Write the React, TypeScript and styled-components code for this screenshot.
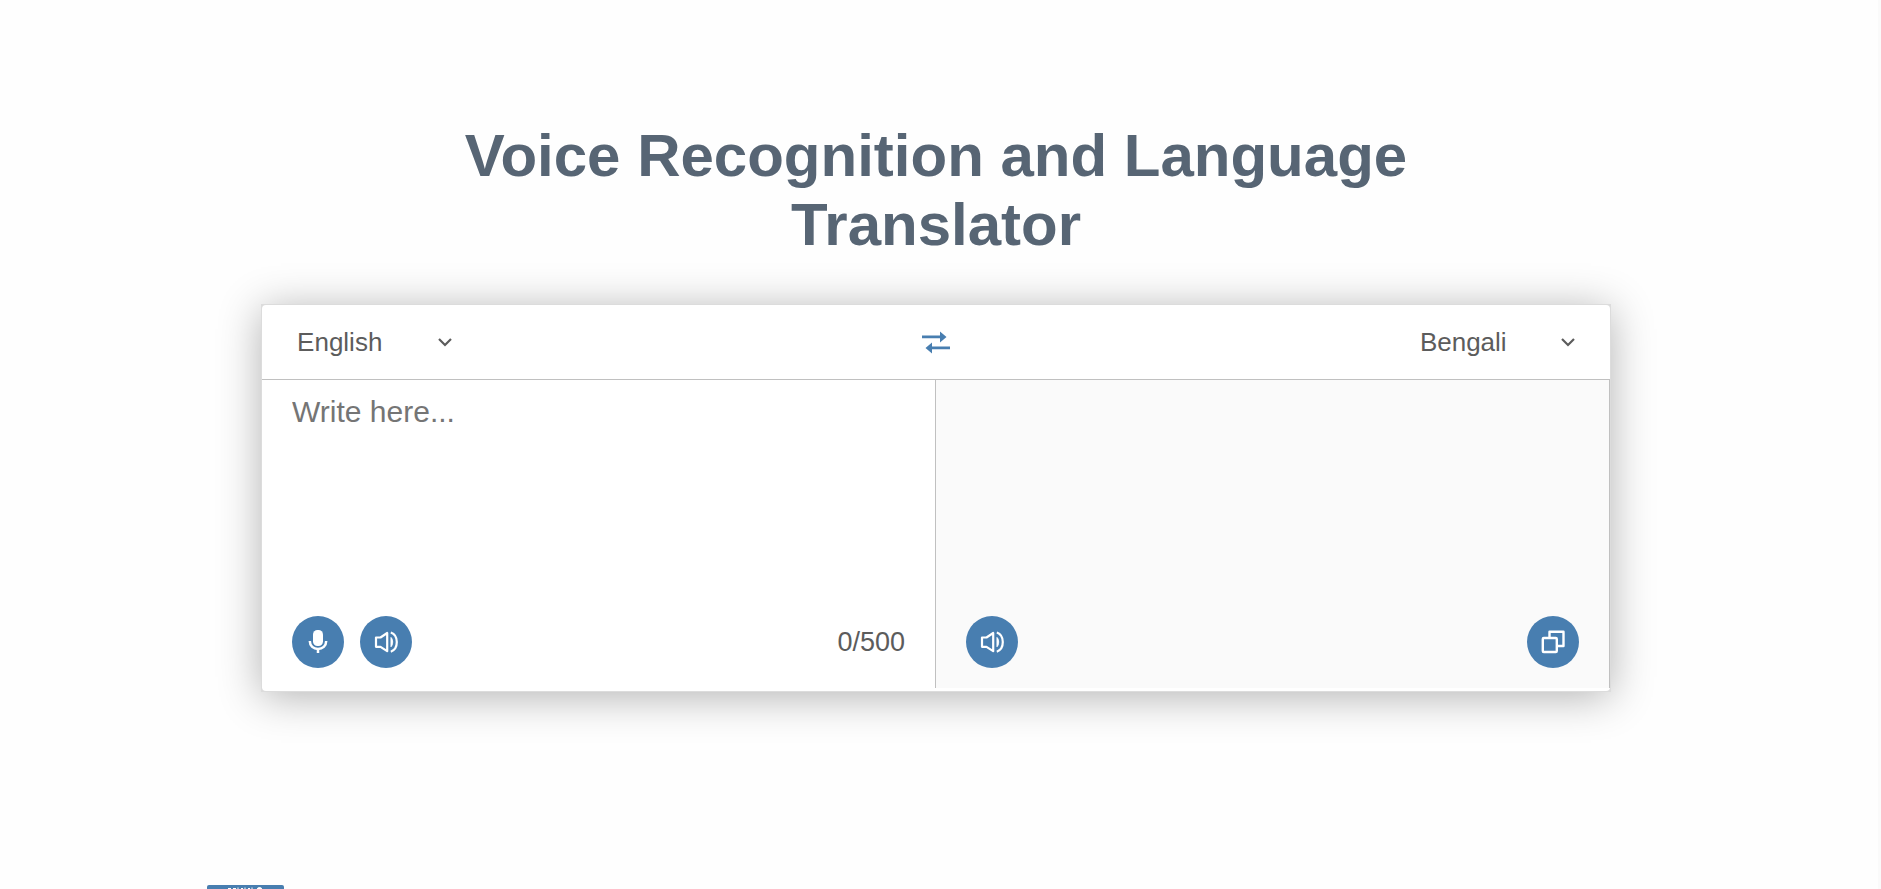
import React, { useState } from "react";
import styled, { createGlobalStyle } from "styled-components";

const GlobalStyle = createGlobalStyle`
  *, *::before, *::after { box-sizing: border-box; }
  body {
    margin: 0;
    background: #fefefe;
    font-family: "Liberation Sans", Arial, Helvetica, sans-serif;
  }
  button, select, textarea { font-family: inherit; }
`;

const Page = styled.div`
  display: flex;
  height: 100vh;
  overflow: hidden;
`;

const Main = styled.main`
  flex: 1;
  display: flex;
  flex-direction: column;
  align-items: center;
  padding: 121px 6px 0 0;
`;

const Gutter = styled.div`
  width: 3px;
  background: #fafafa;
`;

const Title = styled.h1`
  width: 60%;
  margin: 0 0 45px;
  color: #576574;
  font-size: 60px;
  line-height: 69px;
  text-align: center;
`;

const Frame = styled.div`
  width: calc(72% + 2px);
  border: 1px solid #dcdcdc;
  background: #dcdcdc;
  box-shadow: 0 5px 40px rgba(0, 0, 0, 0.3);
`;

const Card = styled.section`
  padding-bottom: 3px;
  border-radius: 4px;
  background: #fff;
`;

const Toolbar = styled.header`
  display: flex;
  align-items: center;
  justify-content: space-between;
  height: 75px;
  padding: 0 30px;
  border-bottom: 1px solid #c0c0c0;
`;

const SelectBox = styled.label`
  display: grid;
  align-items: center;
  width: 165px;

  > * { grid-area: 1 / 1; }
  svg { justify-self: end; margin-right: 5px; pointer-events: none; }
`;

const Select = styled.select`
  width: 100%;
  height: 40px;
  padding: 0 5px;
  border: none;
  outline: none;
  appearance: none;
  background: none;
  color: #5c5c5c;
  font-size: 26px;
`;

const SwapButton = styled.button`
  display: flex;
  padding: 0;
  border: none;
  background: none;
  color: #487eb0;
  cursor: pointer;
`;

const Panes = styled.div`
  display: grid;
  grid-template-columns: 1fr 1fr;
`;

const Pane = styled.div<{ $output?: boolean }>`
  display: flex;
  flex-direction: column;
  justify-content: space-between;
  height: 308px;
  padding: 15px 30px 20px;
  border-right: 1px solid #c0c0c0;
  background: ${({ $output }) => ($output ? "#fafafa" : "#fff")};
`;

const TextArea = styled.textarea`
  flex: 1;
  width: 100%;
  padding: 0;
  border: none;
  outline: none;
  resize: none;
  background: none;
  color: #5c5c5c;
  font-size: 30px;
  line-height: 34px;

  &::placeholder { color: #757575; }
`;

const Controls = styled.div`
  display: flex;
  align-items: center;
  justify-content: space-between;
`;

const Group = styled.div`
  display: flex;
  gap: 16px;
`;

const RoundButton = styled.button`
  display: flex;
  align-items: center;
  justify-content: center;
  width: 52px;
  height: 52px;
  padding: 0;
  border: none;
  border-radius: 50%;
  background: #487eb0;
  color: #fff;
  cursor: pointer;
`;

const Counter = styled.span`
  color: #5c5c5c;
  font-size: 27px;
`;

const Footer = styled.footer`
  width: 78%;
  margin-top: 193px;
  padding-left: 1px;
`;

const Badge = styled.a`
  display: flex;
  width: 77px;
  height: 28px;
  padding-top: 2px;
  justify-content: center;
  border-radius: 2px;
  background: #487eb0;
`;

const Chevron = () => (
  <svg width="14" height="10" viewBox="0 0 14 10" fill="none" stroke="#5c5c5c" strokeWidth="2.2" aria-hidden="true">
    <path d="M1 2l6 6 6-6" />
  </svg>
);

const SwapIcon = () => (
  <svg width="30" height="24" viewBox="0 0 30 24" fill="currentColor" aria-hidden="true">
    <path d="M1 5.600h18V1.500L25.500 7 19 12.500V8.200H1zM29 16.600H11V12.500L4.500 18 11 23.500v-4.300h18z" />
  </svg>
);

const MicIcon = () => (
  <svg width="24" height="28" viewBox="0 0 24 28" fill="none" aria-hidden="true">
    <rect x="7" y="2" width="10" height="16" rx="4.500" fill="currentColor" />
    <path d="M3.800 13c0 5 3.700 8 8.200 8s8.200-3 8.200-8M12 21v4" stroke="currentColor" strokeWidth="2.500" />
  </svg>
);

const SpeakerIcon = () => (
  <svg width="26" height="26" viewBox="0 0 26 26" fill="none" stroke="currentColor" strokeWidth="2.200" strokeLinejoin="round" aria-hidden="true">
    <path d="M3 8.500h4.500L14.200 4v18.200L7.500 17.800H3z" />
    <path d="M18 8.500c2.200 2.200 2.200 7 0 9.200z" fill="currentColor" strokeWidth="1" />
    <path d="M17.800 3.500c8 2.800 8 16.400 0 19.200" />
  </svg>
);

const CopyIcon = () => (
  <svg width="26" height="26" viewBox="0 0 26 26" fill="none" stroke="currentColor" strokeWidth="2.400" strokeLinejoin="round" aria-hidden="true">
    <rect x="2.800" y="9" width="14" height="14" rx="1" />
    <path d="M9.500 9V2.700h14V17h-6.500" />
  </svg>
);

const BadgeMark = () => (
  <svg width="36" height="8" viewBox="0 0 36 8" fill="none" stroke="#fff" aria-hidden="true">
    <path d="M1 1.500h3M6 1.500h3M11 .500v5M14 1.500h2M18 .500v5M21 1.500h2M25 .500v5" />
    <circle cx="32.500" cy="3" r="2.500" fill="#fff" />
  </svg>
);

const LANGUAGES = ["English", "Bengali", "Hindi", "French", "Spanish"];

function LanguageSelect({ label, value, onChange }: { label: string; value: string; onChange: (v: string) => void }) {
  return (
    <SelectBox>
      <Select aria-label={label} value={value} onChange={(e) => onChange(e.target.value)}>
        {LANGUAGES.map((name) => (
          <option key={name}>{name}</option>
        ))}
      </Select>
      <Chevron />
    </SelectBox>
  );
}

export default function App() {
  const [from, setFrom] = useState("English");
  const [to, setTo] = useState("Bengali");
  const [text, setText] = useState("");

  const swap = () => {
    setFrom(to);
    setTo(from);
  };

  return (
    <Page>
      <GlobalStyle />
      <Main>
        <Title>Voice Recognition and Language Translator</Title>
        <Frame>
          <Card>
            <Toolbar>
              <LanguageSelect label="Source language" value={from} onChange={setFrom} />
              <SwapButton aria-label="Swap languages" onClick={swap}>
                <SwapIcon />
              </SwapButton>
              <LanguageSelect label="Target language" value={to} onChange={setTo} />
            </Toolbar>
            <Panes>
              <Pane>
                <TextArea
                  aria-label="Source text"
                  placeholder="Write here..."
                  maxLength={500}
                  value={text}
                  onChange={(e) => setText(e.target.value)}
                />
                <Controls>
                  <Group>
                    <RoundButton aria-label="Record voice"><MicIcon /></RoundButton>
                    <RoundButton aria-label="Listen to source"><SpeakerIcon /></RoundButton>
                  </Group>
                  <Counter>{text.length}/500</Counter>
                </Controls>
              </Pane>
              <Pane $output>
                <TextArea aria-label="Translation" readOnly />
                <Controls>
                  <RoundButton aria-label="Listen to translation"><SpeakerIcon /></RoundButton>
                  <RoundButton aria-label="Copy translation"><CopyIcon /></RoundButton>
                </Controls>
              </Pane>
            </Panes>
          </Card>
        </Frame>
        <Footer>
          <Badge href="#" aria-label="Site badge"><BadgeMark /></Badge>
        </Footer>
      </Main>
      <Gutter />
    </Page>
  );
}
